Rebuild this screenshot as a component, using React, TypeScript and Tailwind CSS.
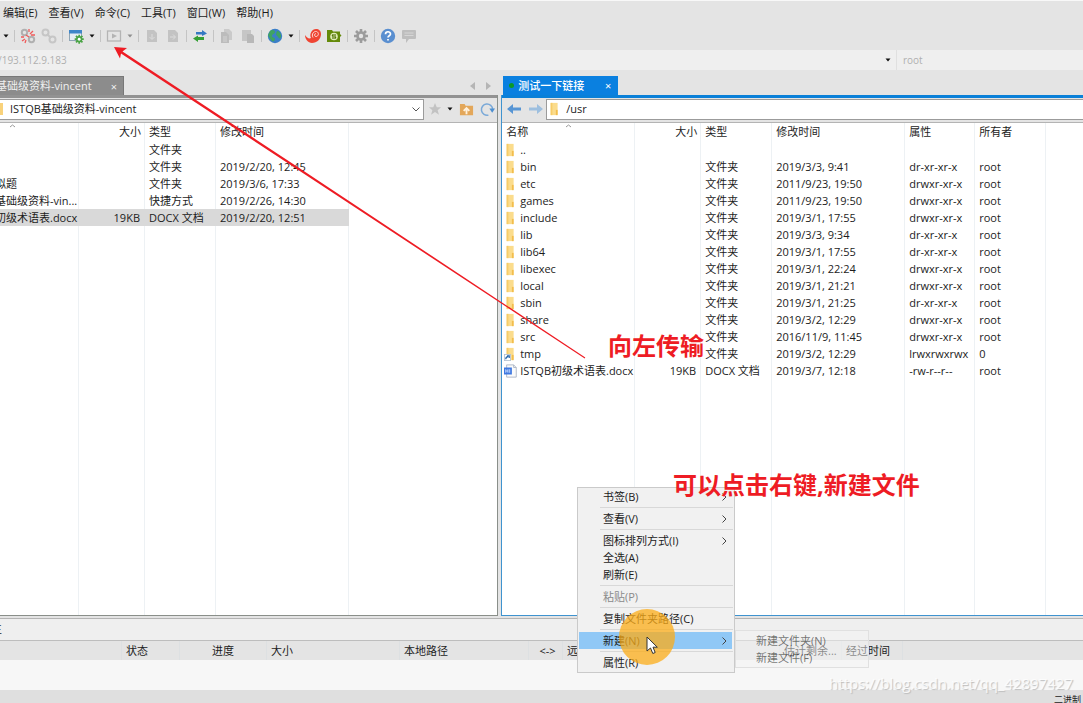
import type { ReactNode } from "react";

const menus = ["编辑(E)", "查看(V)", "命令(C)", "工具(T)", "窗口(W)", "帮助(H)"];

const localFiles = [
  { name: "", size: "", type: "文件夹", time: "" },
  { name: "", size: "", type: "文件夹", time: "2019/2/20, 12:45" },
  { name: "拟题", size: "", type: "文件夹", time: "2019/3/6, 17:33" },
  { name: "基础级资料-vin...", size: "", type: "快捷方式", time: "2019/2/26, 14:30" },
  { name: "初级术语表.docx", size: "19KB", type: "DOCX 文档", time: "2019/2/20, 12:51", selected: true },
];

const remoteFiles = [
  { name: "..", icon: "folder", size: "", type: "", time: "", attr: "", owner: "" },
  { name: "bin", icon: "folder", size: "", type: "文件夹", time: "2019/3/3, 9:41", attr: "dr-xr-xr-x", owner: "root" },
  { name: "etc", icon: "folder", size: "", type: "文件夹", time: "2011/9/23, 19:50", attr: "drwxr-xr-x", owner: "root" },
  { name: "games", icon: "folder", size: "", type: "文件夹", time: "2011/9/23, 19:50", attr: "drwxr-xr-x", owner: "root" },
  { name: "include", icon: "folder", size: "", type: "文件夹", time: "2019/3/1, 17:55", attr: "drwxr-xr-x", owner: "root" },
  { name: "lib", icon: "folder", size: "", type: "文件夹", time: "2019/3/3, 9:34", attr: "dr-xr-xr-x", owner: "root" },
  { name: "lib64", icon: "folder", size: "", type: "文件夹", time: "2019/3/1, 17:55", attr: "dr-xr-xr-x", owner: "root" },
  { name: "libexec", icon: "folder", size: "", type: "文件夹", time: "2019/3/1, 22:24", attr: "drwxr-xr-x", owner: "root" },
  { name: "local", icon: "folder", size: "", type: "文件夹", time: "2019/3/1, 21:21", attr: "drwxr-xr-x", owner: "root" },
  { name: "sbin", icon: "folder", size: "", type: "文件夹", time: "2019/3/1, 21:25", attr: "dr-xr-xr-x", owner: "root" },
  { name: "share", icon: "folder", size: "", type: "文件夹", time: "2019/3/2, 12:29", attr: "drwxr-xr-x", owner: "root" },
  { name: "src", icon: "folder", size: "", type: "文件夹", time: "2016/11/9, 11:45", attr: "drwxr-xr-x", owner: "root" },
  { name: "tmp", icon: "link", size: "", type: "文件夹", time: "2019/3/2, 12:29", attr: "lrwxrwxrwx", owner: "0" },
  { name: "ISTQB初级术语表.docx", icon: "doc", size: "19KB", type: "DOCX 文档", time: "2019/3/7, 12:18", attr: "-rw-r--r--", owner: "root" },
];

const contextMenu = [
  { label: "书签(B)", sub: true, line: true },
  { label: "查看(V)", sub: true, line: true },
  { label: "图标排列方式(I)", sub: true },
  { label: "全选(A)" },
  { label: "刷新(E)", line: true },
  { label: "粘贴(P)", disabled: true, line: true },
  { label: "复制文件夹路径(C)", line: true },
  { label: "新建(N)", sub: true, active: true, line: true },
  { label: "属性(R)" },
];

function Svg({ size = 16, children }: { size?: number; children: ReactNode }) {
  return (
    <svg width={size} height={size} viewBox="0 0 16 16" fill="none" className="shrink-0">
      {children}
    </svg>
  );
}

function ToolButton({ label, children }: { label: string; children: ReactNode }) {
  return (
    <button aria-label={label} className="flex w-5 shrink-0 items-center justify-center">
      <Svg>{children}</Svg>
    </button>
  );
}

function Caret({ muted = false }: { muted?: boolean }) {
  return (
    <button aria-label="更多" className="flex w-[10px] shrink-0 items-center justify-center">
      <svg width="6" height="4" viewBox="0 0 6 4">
        <path d="M0.5 0.5h5L3 3.5z" fill={muted ? "#8f8f8f" : "#111"} />
      </svg>
    </button>
  );
}

function Divider() {
  return (
    <span className="flex w-[5px] shrink-0 justify-center">
      <span className="h-3 w-px bg-[#c4c4c4]" />
    </span>
  );
}

function FileIcon({ kind }: { kind: string }) {
  if (kind === "doc") {
    return (
      <Svg size={14}>
        <path d="M3 1h8l3 3v11H3z" fill="#fafafa" stroke="#a9b4c4" />
        <path d="M11 1v3h3" stroke="#a9b4c4" />
        <rect x="0" y="4" width="9" height="8" fill="#3f78e0" />
        <path d="M2 6v4M2 8h2.500M4.500 6v4M6.500 6v4" stroke="#cfe0ff" />
      </Svg>
    );
  }
  return (
    <Svg size={14}>
      <path d="M3 1h8v14H3z" fill="#fbdc8c" />
      <path d="M3 1h2v14H3z" fill="#f7cc68" />
      <path d="M9 9h2v6H9z" fill="#f2bd4d" />
      {kind === "link" && (
        <>
          <rect x="0.500" y="8.500" width="7" height="7" fill="#fff" stroke="#b5c3d3" />
          <path d="M2 14c0-2 1-3 3-3M3.500 10H6v2.500" stroke="#1d5fa8" strokeWidth="1.300" />
        </>
      )}
    </Svg>
  );
}

function Gear({ color, center = "#e4e4e4" }: { color: string; center?: string }) {
  return (
    <>
      <path
        d="M8 1v14M1 8h14M3 3l10 10M13 3L3 13"
        stroke={color}
        strokeWidth="2.600"
      />
      <circle cx="8" cy="8" r="4.800" fill={color} />
      <circle cx="8" cy="8" r="2.200" fill={center} />
    </>
  );
}

function Toolbar() {
  return (
    <div className="flex h-[26px] shrink-0 items-center gap-px pb-[3px] pl-px">
      <Caret />
      <Divider />
      <ToolButton label="断开">
        <circle cx="4.500" cy="4.500" r="2.700" stroke="#b0b0b0" strokeWidth="2" />
        <circle cx="11.500" cy="11.500" r="2.700" stroke="#b0b0b0" strokeWidth="2" />
        <path d="M9 1v3M10 6l3-3M1 9l3 0M5 15l1-3M2 13l3-2M11 7h4M6 7l3 2" stroke="#ef5a5a" strokeWidth="1.300" />
      </ToolButton>
      <ToolButton label="重新连接">
        <circle cx="4.500" cy="4.500" r="3" stroke="#c6c6c6" strokeWidth="2" />
        <circle cx="11.500" cy="11.500" r="3" stroke="#c6c6c6" strokeWidth="2" />
        <path d="M6 6l4 4" stroke="#c6c6c6" strokeWidth="2" />
      </ToolButton>
      <Divider />
      <ToolButton label="新建会话">
        <rect x="1.500" y="2.500" width="12" height="10" fill="#e5edf3" stroke="#8fa5b5" />
        <rect x="1" y="2" width="13" height="3.500" fill="#3e86c8" />
        <g transform="translate(6 6) scale(.65)">
          <Gear color="#4ba446" center="#fff" />
        </g>
      </ToolButton>
      <Caret />
      <Divider />
      <ToolButton label="传输">
        <rect x="1.500" y="3" width="13" height="10" stroke="#b4b4b4" strokeWidth="1.300" />
        <path d="M6 5.500l5 2.500-5 2.500z" fill="#b4b4b4" />
      </ToolButton>
      <Caret muted />
      <Divider />
      <ToolButton label="上传文件">
        <path d="M3 2h7l3 3v9H3z" fill="#c3c3c3" />
        <path d="M8 6v5M5.500 9L8 11.500 10.500 9" stroke="#ddd" />
      </ToolButton>
      <ToolButton label="下载文件">
        <path d="M3 2h7l3 3v9H3z" fill="#c3c3c3" />
        <path d="M5 9h5M8 6.500L10.500 9 8 11.500" stroke="#ddd" />
      </ToolButton>
      <Divider />
      <ToolButton label="同步">
        <path d="M4 4h6V2l5 3.500L10 8V6.500H4z" fill="#3679c2" />
        <path d="M12 9H6V7.500L1 10.500 6 14v-2h6z" fill="#35a035" />
      </ToolButton>
      <Divider />
      <ToolButton label="复制">
        <path d="M5 1h5l3 3v8H5z" fill="#cacaca" />
        <path d="M2 4h5l3 3v8H2z" fill="#bcbcbc" />
        <path d="M4 9h4M4 11h4M4 13h4" stroke="#d4d4d4" />
      </ToolButton>
      <ToolButton label="粘贴">
        <path d="M2 2h9v11H2z" fill="#c6c6c6" />
        <path d="M7 6h5l2 2v7H7z" fill="#b8b8b8" />
      </ToolButton>
      <Divider />
      <ToolButton label="浏览器">
        <circle cx="8" cy="8" r="7.200" fill="#3b7fc8" />
        <path d="M3 3c2-2 5-1 5 1S5 6 5 8s3 1 3 3-2 3-3 2-3-3-4-6zM10 3c2 0 4 2 4 5s-2 3-3 1-2-1-2-3z" fill="#3fa363" />
      </ToolButton>
      <Caret />
      <Divider />
      <ToolButton label="Xshell">
        <path d="M0 7c2 3 4 4 6 3-2-4 1-9 5-9 3 0 5 2 5 5 0 5-4 9-9 9-4 0-7-4-7-8z" fill="#ef4432" />
        <path d="M8 9.500C6 6 9 3 11.500 3.500c3 1 2 5-.5 5-2 0-2-3 0-2.800" stroke="#ffd9d2" />
      </ToolButton>
      <ToolButton label="Xftp">
        <path d="M1 2h5l1 1.500h7V6l1.500 1.500L14 9v5H1z" fill="#648a0a" />
        <circle cx="8" cy="8.500" r="3.800" fill="#dfeab8" />
        <path d="M7 6v5M9 6v5M7 7l-1 1M9 10l1-1" stroke="#55760a" strokeWidth="1.200" />
      </ToolButton>
      <Divider />
      <ToolButton label="选项">
        <Gear color="#9c9c9c" />
      </ToolButton>
      <Divider />
      <ToolButton label="帮助">
        <circle cx="8" cy="8" r="7.200" fill="#5a8fd0" />
        <path d="M5.500 6.200C5.500 3 10.500 3 10.500 6c0 1.800-2.500 1.800-2.500 3.600M8 11v1.500" stroke="#fff" strokeWidth="1.700" />
      </ToolButton>
      <ToolButton label="反馈">
        <path d="M2 2h12a1 1 0 011 1v7a1 1 0 01-1 1H8l-3 4v-4H2a1 1 0 01-1-1V3a1 1 0 011-1z" fill="#bebebe" />
        <path d="M3.500 5h9M3.500 7.500h9" stroke="#d6d6d6" />
      </ToolButton>
    </div>
  );
}

function LocalPane() {
  return (
    <section className="flex w-[46%] shrink-0 flex-col">
      <div className="flex h-[25px] shrink-0 items-end justify-between">
        <div className="flex h-[19px] w-[124px] items-center justify-between overflow-hidden border-t border-r border-[#777] bg-[#8c8c8c] pr-[6px] text-[#f0f0f0]">
          <span className="-ml-1 whitespace-nowrap">基础级资料-vincent</span>
          <button aria-label="关闭标签" className="leading-none">×</button>
        </div>
        <div className="flex h-[19px] items-center gap-[9px] pr-[7px]">
          <button aria-label="上一个标签">
            <svg width="6" height="8" viewBox="0 0 6 8"><path d="M5 0v8L0 4z" fill="#b5b5b5" /></svg>
          </button>
          <button aria-label="下一个标签">
            <svg width="6" height="8" viewBox="0 0 6 8"><path d="M1 0v8l5-4z" fill="#b5b5b5" /></svg>
          </button>
        </div>
      </div>
      <div className="flex min-h-0 flex-1 flex-col border-r border-b border-[#8a8f8a]">
        <div className="flex h-[27px] shrink-0 items-center border-t-[3px] border-[#929292] pb-[2px]">
          <div className="relative flex h-[21px] flex-1 items-center border border-l-0 border-[#9b9b9b] bg-white">
            <span className="h-3 w-[3px] shrink-0 bg-[#f9d27b]" />
            <select aria-label="本地路径" className="h-full w-full appearance-none bg-transparent pl-[7px] outline-none">
              <option>ISTQB基础级资料-vincent</option>
            </select>
            <svg width="8" height="5" viewBox="0 0 8 5" className="pointer-events-none absolute right-[3px]">
              <path d="M0.500 0.500L4 4 7.500 0.500" stroke="#555" fill="none" />
            </svg>
          </div>
          <div className="flex w-[73px] shrink-0 items-center pl-1">
            <button aria-label="收藏" className="mr-[3px]">
              <Svg size={14}><path d="M8 1l2 5h5l-4 3.500 1.500 5L8 11.500 3.500 14.500 5 9.500 1 6h5z" fill="#c2c2c2" /></Svg>
            </button>
            <Caret />
            <button aria-label="上一级" className="ml-1">
              <Svg size={15}>
                <path d="M1 2h5l1 2h8v10H1z" fill="#e3a75a" />
                <path d="M8 13V7M5 9.500l3-3 3 3" stroke="#fff1dc" strokeWidth="2" />
              </Svg>
            </button>
            <button aria-label="刷新" className="ml-[6px]">
              <Svg size={15}>
                <path d="M9 14A6 6 0 1113.500 8" stroke="#7aa9d8" strokeWidth="1.600" />
                <path d="M10 7h6l-3 4.500z" fill="#4d8fd0" />
              </Svg>
            </button>
          </div>
        </div>
        <div className="min-h-0 flex-1 overflow-hidden border-t border-[#b4b4b4] bg-white">
          <table className="h-full w-full table-fixed border-separate border-spacing-0 text-left">
            <colgroup>
              <col className="w-[79px]" />
              <col className="w-[66px]" />
              <col className="w-[71px]" />
              <col className="w-[133px]" />
              <col />
            </colgroup>
            <thead>
              <tr className="h-[18px] *:border-r *:border-[#edf1f4] *:p-0 *:pl-1 *:font-normal">
                <th>
                  <svg width="7" height="16" viewBox="0 0 7 16" className="ml-[5px]">
                    <path d="M1 3l2.500-2L6 3" stroke="#999" fill="none" />
                  </svg>
                </th>
                <th className="text-right">
                  <span className="pr-[3px]">大小</span>
                </th>
                <th>类型</th>
                <th>修改时间</th>
                <th className="border-r-0!" />
              </tr>
            </thead>
            <tbody>
              {localFiles.map((f, i) => (
                <tr
                  key={i}
                  className={
                    "h-[17px] *:border-r *:border-[#edf1f4] *:p-0 *:whitespace-nowrap " +
                    (f.selected ? "*:not-last:border-[#d9d9d9] *:not-last:bg-[#d9d9d9]" : "")
                  }
                >
                  <td><div className="-ml-[5px]">{f.name}</div></td>
                  <td><div className="pr-1 text-right">{f.size}</div></td>
                  <td><div className="pl-1">{f.type}</div></td>
                  <td><div className="pl-1">{f.time}</div></td>
                  <td className="border-r-0!" />
                </tr>
              ))}
              <tr className="*:border-r *:border-[#edf1f4]">
                <td /><td /><td /><td /><td className="border-r-0!" />
              </tr>
            </tbody>
          </table>
        </div>
      </div>
    </section>
  );
}

function RemotePane() {
  return (
    <section className="ml-[3px] flex min-w-0 flex-1 flex-col">
      <div className="flex h-[25px] shrink-0 items-end pl-[2px]">
        <div className="flex h-[19px] w-[115px] items-center bg-[#0a80e0] pr-[7px] pl-[6px] text-white">
          <span className="mr-[4px] size-[5px] rounded-full bg-[#0a9a28]" />
          <span className="flex-1 font-medium whitespace-nowrap">测试一下链接</span>
          <button aria-label="关闭标签" className="leading-none">×</button>
        </div>
      </div>
      <div className="flex min-h-0 flex-1 flex-col border-b border-l border-[#3f93cf]">
        <div className="flex h-[27px] shrink-0 items-center border-t-[3px] border-[#0a80d8] pb-[2px]">
          <button aria-label="后退" className="ml-1 w-[22px]">
            <Svg><path d="M1 8l6-5v3.500h8v3H7V13z" fill="#5795d4" /></Svg>
          </button>
          <button aria-label="前进" className="w-[18px]">
            <Svg><path d="M15 8L9 3v3.500H1v3h8V13z" fill="#9dbfdf" /></Svg>
          </button>
          <label className="flex h-[21px] flex-1 items-center border border-r-0 border-[#9b9b9b] bg-white pl-[1px]">
            <FileIcon kind="folder" />
            <input aria-label="远程路径" defaultValue="/usr" className="w-full pl-[4px] outline-none" />
          </label>
        </div>
        <div className="min-h-0 flex-1 overflow-hidden border-t border-[#b4b4b4] bg-white">
          <table className="h-full w-full table-fixed border-separate border-spacing-0 text-left">
            <colgroup>
              <col className="w-[133px]" />
              <col className="w-[66px]" />
              <col className="w-[71px]" />
              <col className="w-[133px]" />
              <col className="w-[70px]" />
              <col className="w-[71px]" />
              <col />
            </colgroup>
            <thead>
              <tr className="h-[18px] *:border-r *:border-[#edf1f4] *:p-0 *:pl-1 *:font-normal">
                <th>
                  <span className="flex items-center">
                    <span className="w-[59px]">名称</span>
                    <svg width="7" height="16" viewBox="0 0 7 16">
                      <path d="M1 3l2.500-2L6 3" stroke="#999" fill="none" />
                    </svg>
                  </span>
                </th>
                <th className="text-right">
                  <span className="pr-[3px]">大小</span>
                </th>
                <th>类型</th>
                <th>修改时间</th>
                <th>属性</th>
                <th>所有者</th>
                <th className="border-r-0!" />
              </tr>
            </thead>
            <tbody>
              {remoteFiles.map((f) => (
                <tr key={f.name} className="h-[17px] *:border-r *:border-[#edf1f4] *:p-0 *:whitespace-nowrap">
                  <td>
                    <div className="flex h-[17px] items-center gap-[2px] pl-[2px]">
                      <FileIcon kind={f.icon} />
                      {f.name}
                    </div>
                  </td>
                  <td><div className="pr-1 text-right">{f.size}</div></td>
                  <td><div className="pl-1">{f.type}</div></td>
                  <td><div className="pl-1">{f.time}</div></td>
                  <td><div className="pl-1">{f.attr}</div></td>
                  <td><div className="pl-1">{f.owner}</div></td>
                  <td className="border-r-0!" />
                </tr>
              ))}
              <tr className="*:border-r *:border-[#edf1f4]">
                <td /><td /><td /><td /><td /><td /><td className="border-r-0!" />
              </tr>
            </tbody>
          </table>
        </div>
      </div>
    </section>
  );
}

function TransferQueue() {
  return (
    <section className="mt-[2px] shrink-0 border-t border-[#b4b4b4] bg-[#f7f7f7]">
      <div className="h-[22px] overflow-hidden border-b border-[#bdbdbd] bg-[#efefef]">
        <span className="-ml-[9px] block leading-[20px]">主</span>
      </div>
      <table className="w-full table-fixed border-separate border-spacing-0 bg-[#e4e4e4] text-left">
        <colgroup>
          <col className="w-[122px]" />
          <col className="w-[58px]" />
          <col className="w-[87px]" />
          <col className="w-[133px]" />
          <col className="w-[129px]" />
          <col className="w-[34px]" />
          <col className="w-[217px]" />
          <col className="w-[62px]" />
          <col className="w-[61px]" />
          <col />
        </colgroup>
        <thead>
          <tr className="h-[19px] *:border-r *:border-[#dde0e2] *:p-0 *:pl-1 *:font-normal *:whitespace-nowrap">
            <th />
            <th>状态</th>
            <th className="pr-1! text-center">进度</th>
            <th>大小</th>
            <th>本地路径</th>
            <th className="text-center">&lt;-&gt;</th>
            <th>远程路径</th>
            <th>估计剩余...</th>
            <th>经过时间</th>
            <th className="border-r-0!" />
          </tr>
        </thead>
      </table>
      <div className="h-[30px]" />
    </section>
  );
}

function ContextMenu() {
  return (
    <div className="absolute top-[486px] left-[577px] flex items-end">
      <ul className="w-[158px] border border-[#cacaca] bg-[#f1f1f1] pb-px">
        {contextMenu.map((item) => (
          <li key={item.label}>
            <button
              disabled={item.disabled}
              className={
                "mx-px flex h-[17px] w-[153px] items-center justify-between pr-[5px] pl-6 disabled:text-[#8a8a8a] " +
                (item.active ? "bg-[#90c8f6]" : "")
              }
            >
              {item.label}
              {item.sub && (
                <svg width="5" height="8" viewBox="0 0 5 8">
                  <path d="M0.500 0.500L4 4 0.500 7.500" stroke="#444" fill="none" />
                </svg>
              )}
            </button>
            {item.line && <hr className="mt-[2px] mr-px mb-[2px] ml-[22px] border-[#d8d8d8]" />}
          </li>
        ))}
      </ul>
      <ul className="mb-[5px] w-[134px] border border-[#e0e0e0] bg-[#f4f4f4]/50 py-px text-[#000]/55">
        <li><button className="h-[17px] pl-5">新建文件夹(N)</button></li>
        <li><button className="h-[17px] pl-5">新建文件(F)</button></li>
      </ul>
    </div>
  );
}

function Annotations() {
  return (
    <div className="pointer-events-none absolute inset-0 font-bold text-[#ee1c24]">
      <svg width="600" height="370" viewBox="0 0 600 370" className="absolute top-0 left-0">
        <path d="M114 46L127 47 122.500 50.500 300 167.500 585.300 356.600 584.700 357.400 299 169.500 121 52.500 120 57.500z" fill="#ee1c24" />
      </svg>
      <p className="absolute top-[327px] left-[608px] text-2xl leading-9 whitespace-nowrap">向左传输</p>
      <p className="absolute top-[466px] left-[673px] text-2xl leading-9 whitespace-nowrap">可以点击右键,新建文件</p>
      <span className="absolute top-[608px] left-[619px] size-14 rounded-full bg-[#fbac18]/75" />
      <svg width="12" height="19" viewBox="0 0 12 19" className="absolute top-[635px] left-[646px]">
        <path d="M1 1v14l3.500-3 2.300 5.500 2.400-1L7 11.200h4.300z" fill="#fff" stroke="#333" />
      </svg>
    </div>
  );
}

export default function App() {
  return (
    <div className="relative flex h-screen min-h-[600px] flex-col overflow-hidden border-t border-[#f8f8f8] bg-[#e4e4e4] font-['Open_Sans','Noto_Sans_CJK_SC',sans-serif] text-[11px] leading-[16px] text-[#1c1c1c]">
      <nav className="flex h-[23px] shrink-0 items-center gap-[11px] pl-[3px]">
        {menus.map((m) => (
          <button key={m}>{m}</button>
        ))}
      </nav>
      <Toolbar />
      <div className="flex h-5 shrink-0 items-center bg-[#efefef] text-[10px] text-[#b0b0b0]">
        <input aria-label="主机" defaultValue="/193.112.9.183" className="-ml-[2px] h-full min-w-0 flex-1 outline-none" />
        <Caret />
        <span className="ml-[3px] h-full w-px bg-[#e0e0e0]" />
        <input aria-label="用户名" defaultValue="root" className="h-full w-[186px] pl-[6px] outline-none" />
      </div>
      <main className="flex min-h-0 flex-1">
        <LocalPane />
        <RemotePane />
      </main>
      <TransferQueue />
      <footer className="flex h-[13px] shrink-0 justify-end overflow-hidden bg-[#dfdfdf] pr-[2px] text-[9px] leading-[20px]">
        二进制
      </footer>
      <ContextMenu />
      <Annotations />
      <p className="absolute right-[10px] bottom-[8px] text-[15px] leading-6 text-white/80 [text-shadow:1px_1px_1px_#bbb]">
        https://blog.csdn.net/qq_42897427
      </p>
    </div>
  );
}
